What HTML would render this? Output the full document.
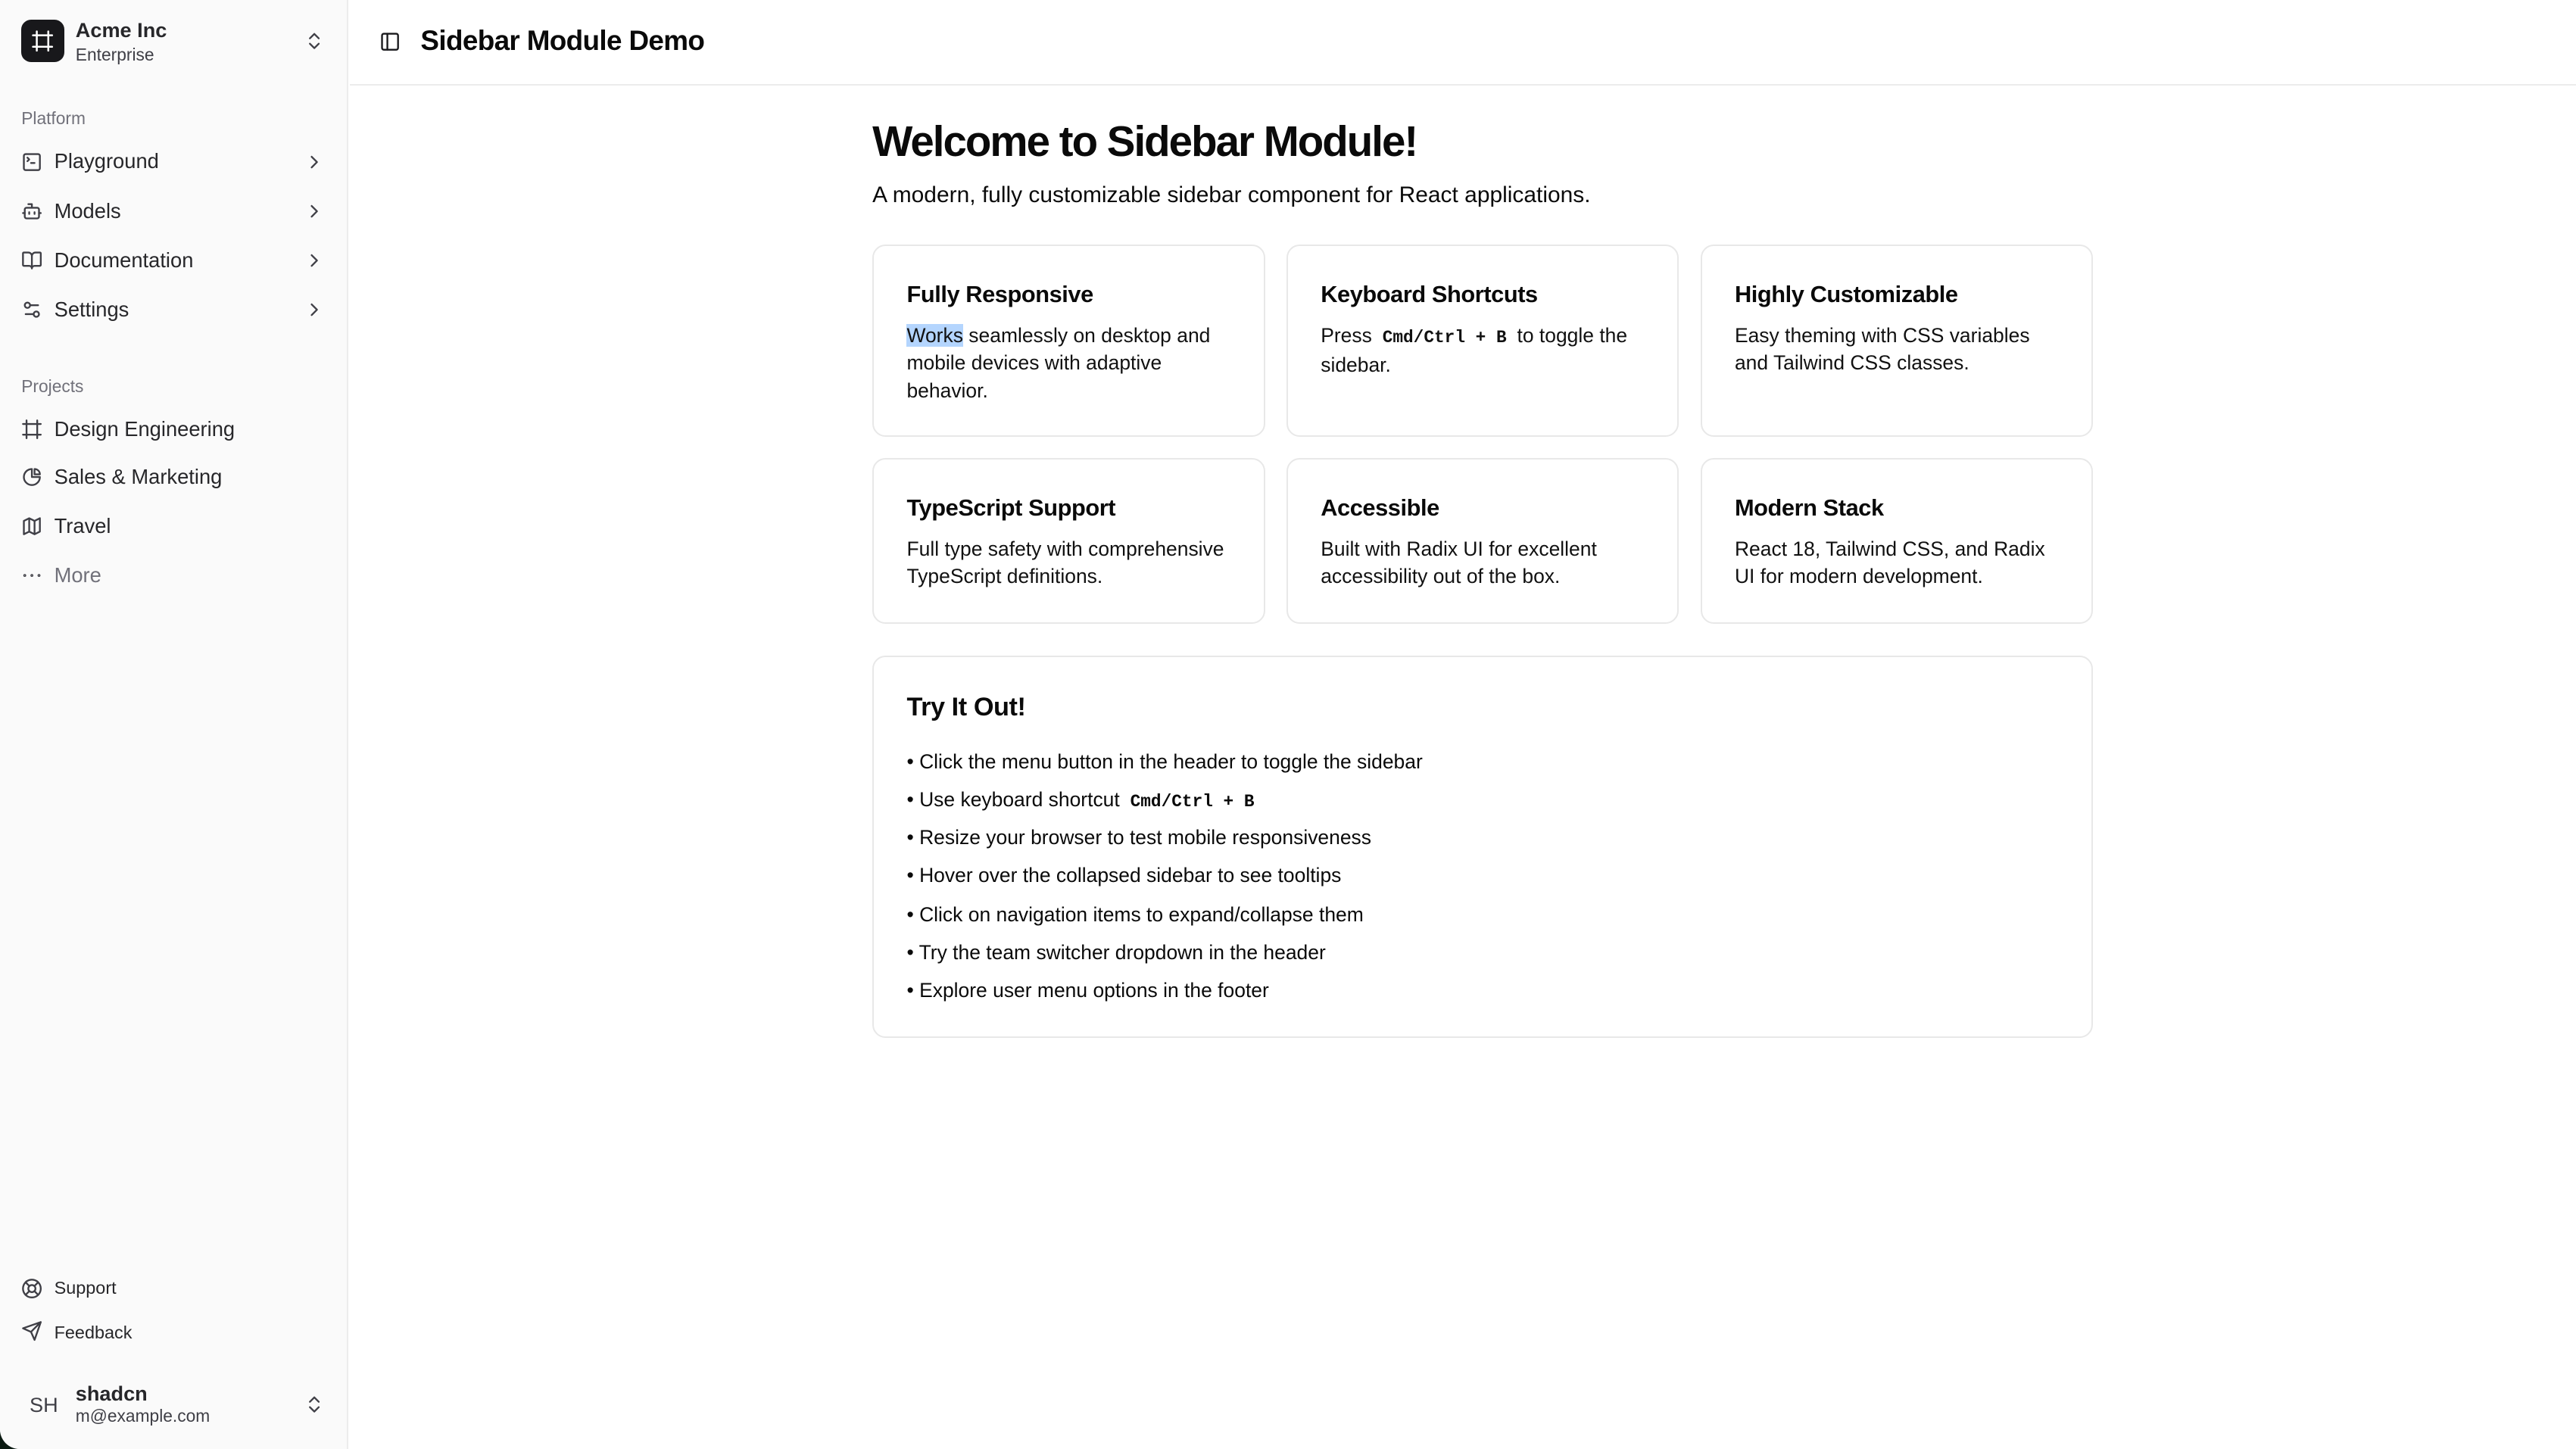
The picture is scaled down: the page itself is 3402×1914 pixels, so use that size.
<!DOCTYPE html>
<html><head><meta charset="utf-8"><style>
*{box-sizing:border-box;margin:0;padding:0}
html,body{width:3402px;height:1914px;overflow:hidden;background:#0b1a12}
#r{zoom:2.16964;width:1568px;height:882.2px;position:relative;background:#fff;font-family:"Liberation Sans",sans-serif;color:#0a0a0a;border-bottom-left-radius:12px;overflow:hidden}
.sb{position:absolute;left:0;top:0;width:212px;height:100%;background:#fafafa;border-right:1px solid #ececec}
.a{position:absolute;white-space:nowrap}
svg{position:absolute;fill:none;stroke:#3f3f46;stroke-width:2;stroke-linecap:round;stroke-linejoin:round}
.lbl{font-size:10.5px;color:#71717a}
.it{font-size:12.6px;color:#27272a}
.card{position:absolute;border:1px solid #e8e8e8;border-radius:8px;background:#fff}
.ct{position:absolute;left:20px;font-size:14.2px;font-weight:bold;letter-spacing:-.2px}
.cd{position:absolute;left:20px;top:46px;font-size:12.2px;line-height:16.7px;color:#111}
code{font-family:"Liberation Mono",monospace;font-weight:bold;font-size:10.5px;padding:0 3px}
.li{position:absolute;left:20px;font-size:12.2px;white-space:nowrap}
</style></head><body><div id="r">
<div class="sb">
 <div class="a" style="left:13px;top:12px;width:26px;height:26px;background:#18181b;border-radius:6px"></div>
 <svg style="left:19px;top:18px;stroke:#fff" width="14" height="14" viewBox="0 0 24 24"><path d="M22 6H2M22 18H2M6 2v20M18 2v20"/></svg>
 <div class="a" style="left:46px;top:11px;font-size:12.5px;font-weight:bold;color:#27272a">Acme Inc</div>
 <div class="a" style="left:46px;top:27px;font-size:10.5px;color:#3f3f46">Enterprise</div>
 <svg style="left:185px;top:18px" width="13" height="14" viewBox="0 0 24 24"><path d="m7 15 5 5 5-5M7 9l5-5 5 5"/></svg>

 <div class="a lbl" style="left:13px;top:66px">Platform</div>
 <svg style="left:13px;top:92px" width="13" height="13" viewBox="0 0 24 24"><rect x="3" y="3" width="18" height="18" rx="2"/><path d="m7 11 2-2-2-2M11 13h4"/></svg>
 <div class="a it" style="left:33px;top:91px">Playground</div>
 <svg style="left:13px;top:122px" width="13" height="13" viewBox="0 0 24 24"><path d="M12 8V4H8"/><rect x="4" y="8" width="16" height="12" rx="2"/><path d="M2 14h2M20 14h2M15 13v2M9 13v2"/></svg>
 <div class="a it" style="left:33px;top:121px">Models</div>
 <svg style="left:13px;top:152px" width="13" height="13" viewBox="0 0 24 24"><path d="M12 7v14M3 18a1 1 0 0 1-1-1V4a1 1 0 0 1 1-1h5a4 4 0 0 1 4 4 4 4 0 0 1 4-4h5a1 1 0 0 1 1 1v13a1 1 0 0 1-1 1h-6a3 3 0 0 0-3 3 3 3 0 0 0-3-3z"/></svg>
 <div class="a it" style="left:33px;top:151px">Documentation</div>
 <svg style="left:13px;top:182px" width="13" height="13" viewBox="0 0 24 24"><path d="M14 17H5M19 7h-9"/><circle cx="17" cy="17" r="3"/><circle cx="7" cy="7" r="3"/></svg>
 <div class="a it" style="left:33px;top:181px">Settings</div>
 <svg style="left:185px;top:92px" width="13" height="13" viewBox="0 0 24 24"><path d="m9 18 6-6-6-6"/></svg>
 <svg style="left:185px;top:122px" width="13" height="13" viewBox="0 0 24 24"><path d="m9 18 6-6-6-6"/></svg>
 <svg style="left:185px;top:152px" width="13" height="13" viewBox="0 0 24 24"><path d="m9 18 6-6-6-6"/></svg>
 <svg style="left:185px;top:182px" width="13" height="13" viewBox="0 0 24 24"><path d="m9 18 6-6-6-6"/></svg>

 <div class="a lbl" style="left:13px;top:229px">Projects</div>
 <svg style="left:13px;top:255px" width="13" height="13" viewBox="0 0 24 24"><path d="M22 6H2M22 18H2M6 2v20M18 2v20"/></svg>
 <div class="a it" style="left:33px;top:254px">Design Engineering</div>
 <svg style="left:13px;top:284px" width="13" height="13" viewBox="0 0 24 24"><path d="M21 12a9 9 0 1 1-9-9v9z"/><path d="M15 3a6 6 0 0 1 6 6h-6z"/></svg>
 <div class="a it" style="left:33px;top:283px">Sales &amp; Marketing</div>
 <svg style="left:13px;top:314px" width="13" height="13" viewBox="0 0 24 24"><path d="M3 6l6-3 6 3 6-3v15l-6 3-6-3-6 3zM9 3v15M15 6v15"/></svg>
 <div class="a it" style="left:33px;top:313px">Travel</div>
 <svg style="left:13px;top:344px" width="13" height="13" viewBox="0 0 24 24"><circle cx="4" cy="12" r=".6"/><circle cx="12" cy="12" r=".6"/><circle cx="20" cy="12" r=".6"/></svg>
 <div class="a it" style="left:33px;top:343px;color:#71717a">More</div>

 <svg style="left:13px;top:778px" width="13" height="13" viewBox="0 0 24 24"><circle cx="12" cy="12" r="10"/><circle cx="12" cy="12" r="4"/><path d="m4.9 4.9 4.3 4.3M14.8 9.2l4.3-4.3M14.8 14.8l4.3 4.3M9.2 14.8l-4.3 4.3"/></svg>
 <div class="a" style="left:33px;top:778px;font-size:10.8px;color:#27272a">Support</div>
 <svg style="left:13px;top:804px" width="13" height="13" viewBox="0 0 24 24"><path d="M22 2 11 13M22 2l-7 20-4-9-9-4z"/></svg>
 <div class="a" style="left:33px;top:805px;font-size:10.8px;color:#27272a">Feedback</div>
 <div class="a" style="left:18px;top:848px;font-size:12.5px;color:#3f3f46">SH</div>
 <div class="a" style="left:46px;top:841px;font-size:12.5px;font-weight:bold;color:#27272a">shadcn</div>
 <div class="a" style="left:46px;top:856px;font-size:10.5px;color:#3f3f46">m@example.com</div>
 <svg style="left:185px;top:848px" width="13" height="14" viewBox="0 0 24 24"><path d="m7 15 5 5 5-5M7 9l5-5 5 5"/></svg>
</div>

<div class="a" style="left:213px;top:51px;width:1355px;height:1px;background:#ececec"></div>
<svg style="left:231px;top:19px;stroke:#18181b" width="13" height="13" viewBox="0 0 24 24"><rect x="3" y="3" width="18" height="18" rx="2"/><path d="M9 3v18"/></svg>
<div class="a" style="left:256px;top:15px;font-size:17px;font-weight:bold;letter-spacing:-.3px">Sidebar Module Demo</div>

<div class="a" style="left:531px;top:71px;font-size:26px;font-weight:bold;letter-spacing:-.9px">Welcome to Sidebar Module!</div>
<div class="a" style="left:531px;top:111px;font-size:13.8px">A modern, fully customizable sidebar component for React applications.</div>

<div class="card" style="left:531px;top:149px;width:239px;height:117px"><div class="ct" style="top:21px">Fully Responsive</div><div class="cd"><span style="background:#b4d5fe">Works</span> seamlessly on desktop and<br>mobile devices with adaptive<br>behavior.</div></div>
<div class="card" style="left:783px;top:149px;width:239px;height:117px"><div class="ct" style="top:21px">Keyboard Shortcuts</div><div class="cd">Press <code>Cmd/Ctrl + B</code> to toggle the<br>sidebar.</div></div>
<div class="card" style="left:1035px;top:149px;width:239px;height:117px"><div class="ct" style="top:21px">Highly Customizable</div><div class="cd">Easy theming with CSS variables<br>and Tailwind CSS classes.</div></div>
<div class="card" style="left:531px;top:279px;width:239px;height:101px"><div class="ct" style="top:21px">TypeScript Support</div><div class="cd">Full type safety with comprehensive<br>TypeScript definitions.</div></div>
<div class="card" style="left:783px;top:279px;width:239px;height:101px"><div class="ct" style="top:21px">Accessible</div><div class="cd">Built with Radix UI for excellent<br>accessibility out of the box.</div></div>
<div class="card" style="left:1035px;top:279px;width:239px;height:101px"><div class="ct" style="top:21px">Modern Stack</div><div class="cd">React 18, Tailwind CSS, and Radix<br>UI for modern development.</div></div>

<div class="card" style="left:531px;top:399px;width:743px;height:233px">
 <div class="ct" style="top:22px;font-size:15.8px">Try It Out!</div>
 <div class="li" style="top:57px">• Click the menu button in the header to toggle the sidebar</div>
 <div class="li" style="top:80px">• Use keyboard shortcut <code>Cmd/Ctrl + B</code></div>
 <div class="li" style="top:103px">• Resize your browser to test mobile responsiveness</div>
 <div class="li" style="top:126px">• Hover over the collapsed sidebar to see tooltips</div>
 <div class="li" style="top:150px">• Click on navigation items to expand/collapse them</div>
 <div class="li" style="top:173px">• Try the team switcher dropdown in the header</div>
 <div class="li" style="top:196px">• Explore user menu options in the footer</div>
</div>
</div></body></html>
